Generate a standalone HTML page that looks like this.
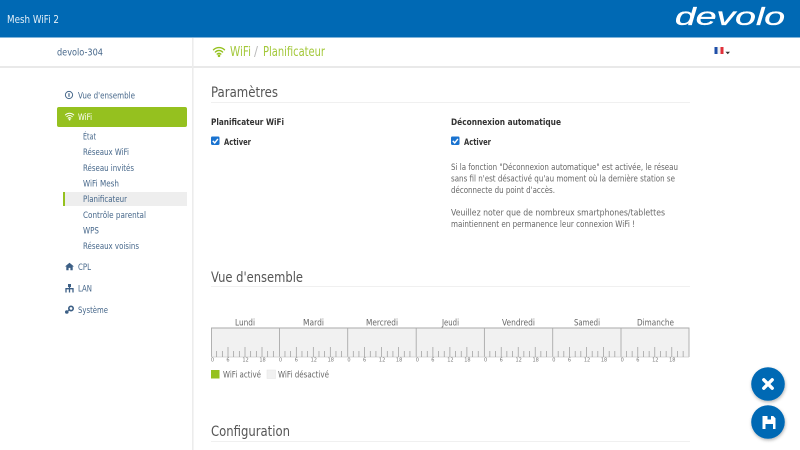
<!DOCTYPE html>
<html lang="fr"><head><meta charset="utf-8"><title>Mesh WiFi 2</title>
<style>
html,body{margin:0;padding:0;background:#fff;width:800px;height:450px;overflow:hidden}
svg{display:block;filter:blur(.3px)}
text{font-family:"DejaVu Sans","Liberation Sans",sans-serif}
.n{font-size:9px;fill:#46678a}
.h{font-size:14.5px;fill:#555}
.b{font-size:9.2px;font-weight:bold;fill:#333}
.p{font-size:9px;fill:#666}
.d{font-size:9px;fill:#666}
.t{font-size:5px;fill:#777}
.g{font-size:13px;fill:#a3c83a}
</style></head><body>
<svg width="800" height="450" viewBox="0 0 800 450" xmlns="http://www.w3.org/2000/svg">
<defs>
<filter id="s" x="-30%" y="-30%" width="160%" height="160%"><feDropShadow dx="0.5" dy="1.5" stdDeviation="1.5" flood-color="#000" flood-opacity=".3"/></filter>
<path id="ticks" d="M5.67 351v6M11.33 351v6M17 347v10M22.67 351v6M28.33 351v6M34 347v10M39.67 351v6M45.33 351v6M51 347v10M56.67 351v6M62.33 351v6" stroke="#999" stroke-width=".7" fill="none"/>
<g id="cb"><rect width="8.5" height="8.5" rx="1.2" fill="#1a73d0"/><path d="M1.8 4.4l1.9 2 3.2-4" stroke="#fff" stroke-width="1.4" fill="none"/></g>
<g id="wifi" fill="none" stroke-linecap="round"><path d="M.5 2.800c3.200-3 7.800-3 11 0M2.400 5c2.200-2 5-2 7.200 0M4.200 7.100c1.100-.9 2.500-.9 3.600 0"/><circle cx="6" cy="8.800" r=".6"/></g>
</defs>

<rect width="800" height="37.5" fill="#0069b4"/>
<text x="7" y="23" font-size="11" fill="#e4f0f8" textLength="52" lengthAdjust="spacingAndGlyphs">Mesh WiFi 2</text>
<text x="675" y="25" font-size="25" font-style="italic" fill="#fff" stroke="#fff" stroke-width=".35" style="font-family:'Liberation Sans',sans-serif" textLength="110" lengthAdjust="spacingAndGlyphs">devolo</text>

<rect x="0" y="66" width="800" height="2" fill="#e9e9e9"/>
<rect x="192" y="38" width="1.6" height="412" fill="#ececec"/>

<text x="57" y="55.500" class="n" style="font-size:9.8px" textLength="46" lengthAdjust="spacingAndGlyphs">devolo-304</text>

<circle cx="69" cy="95" r="3.6" fill="none" stroke="#46678a" stroke-width="1"/><path d="M69 93.200v3.600" stroke="#46678a" stroke-width="1.200"/>
<text x="78" y="98.500" class="n" textLength="57" lengthAdjust="spacingAndGlyphs">Vue d'ensemble</text>

<rect x="57" y="107" width="130" height="20" rx="2" fill="#95c11f"/>
<use href="#wifi" transform="translate(65 112.800) scale(.76)" stroke="#fff" stroke-width="1.300"/>
<text x="78" y="120" class="n" style="fill:#fff" textLength="14" lengthAdjust="spacingAndGlyphs">WiFi</text>

<rect x="63" y="192" width="124" height="14" fill="#eeeeee"/>
<rect x="63" y="192" width="2" height="14" fill="#95c11f"/>
<text x="83" y="139.500" class="n" textLength="13" lengthAdjust="spacingAndGlyphs">État</text>
<text x="83" y="155" class="n" textLength="46" lengthAdjust="spacingAndGlyphs">Réseaux WiFi</text>
<text x="83" y="171" class="n" textLength="51" lengthAdjust="spacingAndGlyphs">Réseau invités</text>
<text x="83" y="186.500" class="n" textLength="36" lengthAdjust="spacingAndGlyphs">WiFi Mesh</text>
<text x="83" y="202" class="n" textLength="44" lengthAdjust="spacingAndGlyphs">Planificateur</text>
<text x="83" y="218" class="n" textLength="63" lengthAdjust="spacingAndGlyphs">Contrôle parental</text>
<text x="83" y="233.500" class="n" textLength="16" lengthAdjust="spacingAndGlyphs">WPS</text>
<text x="83" y="249" class="n" textLength="56" lengthAdjust="spacingAndGlyphs">Réseaux voisins</text>

<path d="M65 266.500l4.500-3.800 4.500 3.800h-1.300v3.700h-2.300v-2.300h-1.800v2.300h-2.300v-3.700z" fill="#3c5f85"/>
<text x="78" y="270" class="n" textLength="13" lengthAdjust="spacingAndGlyphs">CPL</text>
<path d="M66 292.500v-3.800h7v3.800M69.500 285v7.500" stroke="#3c5f85" stroke-width="1.300" fill="none"/><rect x="68" y="284" width="3" height="3" fill="#3c5f85"/>
<text x="78" y="291.500" class="n" textLength="14" lengthAdjust="spacingAndGlyphs">LAN</text>
<circle cx="71" cy="308.500" r="2.200" fill="none" stroke="#3c5f85" stroke-width="1.600"/><circle cx="66.800" cy="312" r="1.800" fill="#3c5f85"/><path d="M68 311l2-2" stroke="#3c5f85"/>
<text x="78" y="313" class="n" textLength="30" lengthAdjust="spacingAndGlyphs">Système</text>

<use href="#wifi" x="213" y="47" stroke="#95c11f" stroke-width="1.400"/>
<text x="230" y="56" class="g" textLength="21" lengthAdjust="spacingAndGlyphs">WiFi</text>
<text x="254" y="56" class="g" style="fill:#bbb" textLength="4" lengthAdjust="spacingAndGlyphs">/</text>
<text x="263" y="56" class="g" textLength="62" lengthAdjust="spacingAndGlyphs">Planificateur</text>

<rect x="714.500" y="47" width="3" height="7" fill="#1f4fa8"/><rect x="717.500" y="47" width="3" height="7" fill="#f2f2f2"/><rect x="720.500" y="47" width="3" height="7" fill="#e0303a"/>
<path d="M725.500 51.800h4.500l-2.250 2.400z" fill="#333"/>

<text x="211" y="97" class="h" textLength="67" lengthAdjust="spacingAndGlyphs">Paramètres</text>
<rect x="211" y="102" width="479" height="1" fill="#f0f0f0"/>
<text x="211" y="125" class="b" textLength="73" lengthAdjust="spacingAndGlyphs">Planificateur WiFi</text>
<use href="#cb" x="211" y="136.500"/>
<text x="224" y="145" class="b" textLength="27" lengthAdjust="spacingAndGlyphs">Activer</text>

<text x="451" y="125" class="b" textLength="110" lengthAdjust="spacingAndGlyphs">Déconnexion automatique</text>
<use href="#cb" x="451" y="136.500"/>
<text x="464" y="145" class="b" textLength="27" lengthAdjust="spacingAndGlyphs">Activer</text>

<text x="451" y="170" class="p" textLength="227" lengthAdjust="spacingAndGlyphs">Si la fonction "Déconnexion automatique" est activée, le réseau</text>
<text x="451" y="181.500" class="p" textLength="224" lengthAdjust="spacingAndGlyphs">sans fil n'est désactivé qu'au moment où la dernière station se</text>
<text x="451" y="193" class="p" textLength="104" lengthAdjust="spacingAndGlyphs">déconnecte du point d'accès.</text>
<text x="451" y="215.500" class="p" textLength="214" lengthAdjust="spacingAndGlyphs">Veuillez noter que de nombreux smartphones/tablettes</text>
<text x="451" y="227" class="p" textLength="184" lengthAdjust="spacingAndGlyphs">maintiennent en permanence leur connexion WiFi !</text>

<text x="211" y="282" class="h" textLength="92" lengthAdjust="spacingAndGlyphs">Vue d'ensemble</text>
<rect x="211" y="286" width="479" height="1" fill="#f0f0f0"/>

<text x="235" y="325.500" class="d" textLength="20" lengthAdjust="spacingAndGlyphs">Lundi</text>
<text x="303" y="325.500" class="d" textLength="21" lengthAdjust="spacingAndGlyphs">Mardi</text>
<text x="366" y="325.500" class="d" textLength="32" lengthAdjust="spacingAndGlyphs">Mercredi</text>
<text x="442" y="325.500" class="d" textLength="17" lengthAdjust="spacingAndGlyphs">Jeudi</text>
<text x="502" y="325.500" class="d" textLength="33" lengthAdjust="spacingAndGlyphs">Vendredi</text>
<text x="574" y="325.500" class="d" textLength="26" lengthAdjust="spacingAndGlyphs">Samedi</text>
<text x="637" y="325.500" class="d" textLength="37" lengthAdjust="spacingAndGlyphs">Dimanche</text>

<rect x="211" y="328" width="478" height="29" fill="#f1f1f1"/>
<path d="M211.500 357v-29h477.500v29M279.500 328v29M347.700 328v29M416.200 328v29M484.400 328v29M552.700 328v29M621 328v29" fill="none" stroke="#aaa" stroke-width=".9"/>
<path d="M211 357h478" stroke="#ccc" stroke-width=".7"/>
<use href="#ticks" x="211"/><use href="#ticks" x="279.300"/><use href="#ticks" x="347.600"/><use href="#ticks" x="415.900"/><use href="#ticks" x="484.200"/><use href="#ticks" x="552.500"/><use href="#ticks" x="620.800"/>

<g text-anchor="middle">
<text class="t" x="212.500" y="361.500">0</text><text class="t" x="228" y="361.500">6</text><text class="t" x="245.500" y="361.500">12</text><text class="t" x="262.500" y="361.500">18</text>
<text class="t" x="280.500" y="361.500">0</text><text class="t" x="296.300" y="361.500">6</text><text class="t" x="313.800" y="361.500">12</text><text class="t" x="330.800" y="361.500">18</text>
<text class="t" x="349" y="361.500">0</text><text class="t" x="364.600" y="361.500">6</text><text class="t" x="382.100" y="361.500">12</text><text class="t" x="399.100" y="361.500">18</text>
<text class="t" x="417.300" y="361.500">0</text><text class="t" x="432.900" y="361.500">6</text><text class="t" x="450.400" y="361.500">12</text><text class="t" x="467.400" y="361.500">18</text>
<text class="t" x="485.600" y="361.500">0</text><text class="t" x="501.200" y="361.500">6</text><text class="t" x="518.700" y="361.500">12</text><text class="t" x="535.700" y="361.500">18</text>
<text class="t" x="553.900" y="361.500">0</text><text class="t" x="569.500" y="361.500">6</text><text class="t" x="587" y="361.500">12</text><text class="t" x="604" y="361.500">18</text>
<text class="t" x="622.200" y="361.500">0</text><text class="t" x="637.800" y="361.500">6</text><text class="t" x="655.300" y="361.500">12</text><text class="t" x="672.300" y="361.500">18</text>
</g>

<rect x="211" y="370" width="8.500" height="8.500" fill="#95c11f"/>
<text x="223" y="377.500" class="d" textLength="38" lengthAdjust="spacingAndGlyphs">WiFi activé</text>
<rect x="267" y="370" width="8.500" height="8.500" fill="#f1f1f1" stroke="#e4e4e4" stroke-width=".5"/>
<text x="278" y="377.500" class="d" textLength="51" lengthAdjust="spacingAndGlyphs">WiFi désactivé</text>

<text x="211" y="436" class="h" textLength="79" lengthAdjust="spacingAndGlyphs">Configuration</text>
<rect x="211" y="441" width="479" height="1" fill="#f0f0f0"/>

<circle cx="768" cy="384" r="16.800" fill="#0069b4" filter="url(#s)"/>
<path d="M763.800 379.800l8.400 8.400M772.200 379.800l-8.400 8.400" stroke="#fff" stroke-width="3.400" stroke-linecap="round"/>
<circle cx="768" cy="422" r="16.800" fill="#0069b4" filter="url(#s)"/>
<path fill-rule="evenodd" d="M762.500 416h10.800l2.200 2.200v10.800h-13zM767.500 416v3.500h3.500v-3.500zM765.500 424v5h7.500v-5z" fill="#fff"/>
</svg>
</body></html>
